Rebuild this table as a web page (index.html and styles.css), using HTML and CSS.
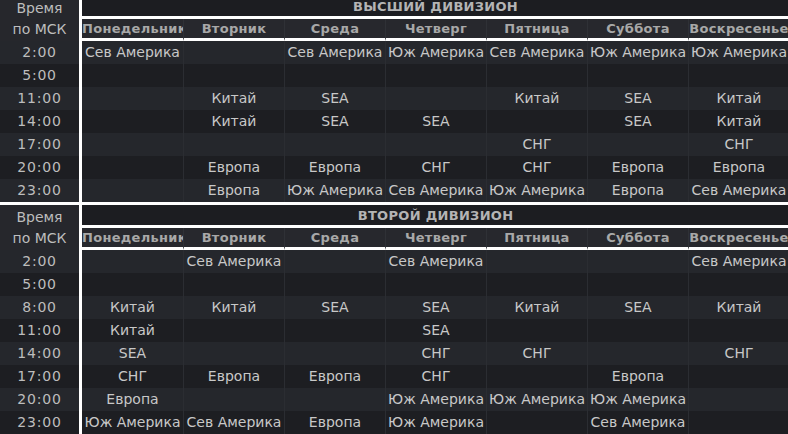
FILE: index.html
```html
<!DOCTYPE html>
<html lang="ru">
<head>
<meta charset="utf-8">
<title>Расписание</title>
<link rel="stylesheet" href="styles.css">
</head>
<body>
<main class="page">
  <table class="division division-first">
    <colgroup><col class="c-time"><col class="c-day"><col class="c-day"><col class="c-day"><col class="c-day"><col class="c-day"><col class="c-day"><col class="c-day"></colgroup>
    <thead>
      <tr><th class="time-head" rowspan="2">Время<br>по МСК</th><th class="title" colspan="7">ВЫСШИЙ ДИВИЗИОН</th></tr>
      <tr class="days"><th class="day first">Понедельник</th><th class="day">Вторник</th><th class="day">Среда</th><th class="day">Четверг</th><th class="day">Пятница</th><th class="day">Суббота</th><th class="day">Воскресенье</th></tr>
    </thead>
    <tbody>
      <tr class="light"><td class="time">2:00</td><td class="cell first">Сев Америка</td><td class="cell"></td><td class="cell">Сев Америка</td><td class="cell">Юж Америка</td><td class="cell">Сев Америка</td><td class="cell">Юж Америка</td><td class="cell">Юж Америка</td></tr>
      <tr class="dark"><td class="time">5:00</td><td class="cell first"></td><td class="cell"></td><td class="cell"></td><td class="cell"></td><td class="cell"></td><td class="cell"></td><td class="cell"></td></tr>
      <tr class="light"><td class="time">11:00</td><td class="cell first"></td><td class="cell">Китай</td><td class="cell">SEA</td><td class="cell"></td><td class="cell">Китай</td><td class="cell">SEA</td><td class="cell">Китай</td></tr>
      <tr class="dark"><td class="time">14:00</td><td class="cell first"></td><td class="cell">Китай</td><td class="cell">SEA</td><td class="cell">SEA</td><td class="cell"></td><td class="cell">SEA</td><td class="cell">Китай</td></tr>
      <tr class="light"><td class="time">17:00</td><td class="cell first"></td><td class="cell"></td><td class="cell"></td><td class="cell"></td><td class="cell">СНГ</td><td class="cell"></td><td class="cell">СНГ</td></tr>
      <tr class="dark"><td class="time">20:00</td><td class="cell first"></td><td class="cell">Европа</td><td class="cell">Европа</td><td class="cell">СНГ</td><td class="cell">СНГ</td><td class="cell">Европа</td><td class="cell">Европа</td></tr>
      <tr class="light"><td class="time">23:00</td><td class="cell first"></td><td class="cell">Европа</td><td class="cell">Юж Америка</td><td class="cell">Сев Америка</td><td class="cell">Юж Америка</td><td class="cell">Европа</td><td class="cell">Сев Америка</td></tr>
    </tbody>
  </table>
  <div class="divider"></div>
  <table class="division">
    <colgroup><col class="c-time"><col class="c-day"><col class="c-day"><col class="c-day"><col class="c-day"><col class="c-day"><col class="c-day"><col class="c-day"></colgroup>
    <thead>
      <tr><th class="time-head" rowspan="2">Время<br>по МСК</th><th class="title" colspan="7">ВТОРОЙ ДИВИЗИОН</th></tr>
      <tr class="days"><th class="day first">Понедельник</th><th class="day">Вторник</th><th class="day">Среда</th><th class="day">Четверг</th><th class="day">Пятница</th><th class="day">Суббота</th><th class="day">Воскресенье</th></tr>
    </thead>
    <tbody>
      <tr class="light"><td class="time">2:00</td><td class="cell first"></td><td class="cell">Сев Америка</td><td class="cell"></td><td class="cell">Сев Америка</td><td class="cell"></td><td class="cell"></td><td class="cell">Сев Америка</td></tr>
      <tr class="dark"><td class="time">5:00</td><td class="cell first"></td><td class="cell"></td><td class="cell"></td><td class="cell"></td><td class="cell"></td><td class="cell"></td><td class="cell"></td></tr>
      <tr class="light"><td class="time">8:00</td><td class="cell first">Китай</td><td class="cell">Китай</td><td class="cell">SEA</td><td class="cell">SEA</td><td class="cell">Китай</td><td class="cell">SEA</td><td class="cell">Китай</td></tr>
      <tr class="dark"><td class="time">11:00</td><td class="cell first">Китай</td><td class="cell"></td><td class="cell"></td><td class="cell">SEA</td><td class="cell"></td><td class="cell"></td><td class="cell"></td></tr>
      <tr class="light"><td class="time">14:00</td><td class="cell first">SEA</td><td class="cell"></td><td class="cell"></td><td class="cell">СНГ</td><td class="cell">СНГ</td><td class="cell"></td><td class="cell">СНГ</td></tr>
      <tr class="dark"><td class="time">17:00</td><td class="cell first">СНГ</td><td class="cell">Европа</td><td class="cell">Европа</td><td class="cell">СНГ</td><td class="cell"></td><td class="cell">Европа</td><td class="cell"></td></tr>
      <tr class="light"><td class="time">20:00</td><td class="cell first">Европа</td><td class="cell"></td><td class="cell"></td><td class="cell">Юж Америка</td><td class="cell">Юж Америка</td><td class="cell">Юж Америка</td><td class="cell"></td></tr>
      <tr class="dark"><td class="time">23:00</td><td class="cell first">Юж Америка</td><td class="cell">Сев Америка</td><td class="cell">Европа</td><td class="cell">Юж Америка</td><td class="cell"></td><td class="cell">Сев Америка</td><td class="cell"></td></tr>
    </tbody>
  </table>
</main>
</body>
</html>
```

FILE: styles.css
```css
html, body {
  margin: 0;
  padding: 0;
  background: #1c1d21;
  overflow: hidden;
}

.page {
  width: 789px;
  font-family: "DejaVu Sans", Verdana, sans-serif;
  color: #c8c8c8;
}

.division {
  border-collapse: separate;
  border-spacing: 0;
  table-layout: fixed;
  width: 789px;
}

.division-first {
  margin-top: -4px;
}

.c-time { width: 82px; }
.c-day { width: 101px; }

.divider {
  height: 3px;
  background: #ffffff;
}

th, td {
  padding: 0;
  white-space: nowrap;
  overflow: hidden;
  text-align: center;
}

.time-head {
  background: #26272c;
  border-right: 3px solid #ffffff;
  font-weight: normal;
  font-size: 14px;
  line-height: 21px;
  padding-top: 1px;
  color: #bdbdbd;
  vertical-align: middle;
}

.title {
  background: #1c1d21;
  border-bottom: 3px solid #ffffff;
  font-size: 13px;
  font-weight: bold;
  line-height: 18px;
  padding-top: 2px;
  color: #b4b4b4;
  letter-spacing: 0.3px;
}

.day {
  background: #27282d;
  border-bottom: 3px solid #ffffff;
  border-left: 1px solid #2f3136;
  font-size: 13px;
  font-weight: bold;
  line-height: 19px;
  color: #a8a8a8;
  letter-spacing: 0.3px;
}

.day.first {
  border-left: 0;
}

.time {
  border-right: 3px solid #ffffff;
  font-size: 14px;
  line-height: 23px;
  color: #bdbdbd;
  letter-spacing: 0.8px;
}

.cell {
  border-left: 1px solid #2b2d32;
  font-size: 14px;
  line-height: 23px;
  color: #c8c8c8;
}

.cell.first {
  border-left: 0;
}

.light td { background: #25272c; }
.dark td { background: #1d1e22; }
```
